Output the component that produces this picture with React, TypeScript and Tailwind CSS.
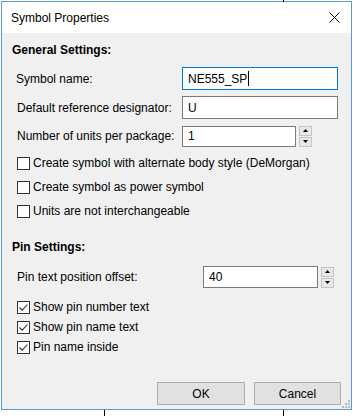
import React from 'react';

const font = { fontFamily: '"Liberation Sans", Arial, sans-serif' };

function CheckBox({ checked = false }: { checked?: boolean }) {
  return (
    <span className="flex h-[13px] w-[13px] shrink-0 items-center justify-center border border-[#333333] bg-white">
      {checked && (
        <svg width="11" height="11" viewBox="0 0 11 11" fill="none">
          <path d="M1.5 5.5 L4.2 8.2 L9.5 2.5" stroke="#333333" strokeWidth="1.1" />
        </svg>
      )}
    </span>
  );
}

function Spinner() {
  return (
    <div className="flex h-[21px] w-[13px] flex-col justify-between">
      <div className="flex h-[10px] items-center justify-center border border-[#c4c4c4] bg-[#e8e8e8]">
        <svg width="5" height="3" viewBox="0 0 5 3">
          <path d="M0 3 L2.5 0 L5 3 Z" fill="#000" />
        </svg>
      </div>
      <div className="flex h-[10px] items-center justify-center border border-[#c4c4c4] bg-[#e8e8e8]">
        <svg width="5" height="3" viewBox="0 0 5 3">
          <path d="M0 0 L2.5 3 L5 0 Z" fill="#000" />
        </svg>
      </div>
    </div>
  );
}

function TextBox({
  value,
  width,
  focused = false,
  height = 23,
}: {
  value: string;
  width: string;
  focused?: boolean;
  height?: number;
}) {
  return (
    <div
      className={`${width} flex items-center border bg-white pl-[5px] ${
        focused ? 'border-[#0078d7]' : 'border-[#7a7a7a]'
      }`}
      style={{ height }}
    >
      <span>{value}</span>
      {focused && <span className="ml-[1px] h-[15px] w-px bg-black" />}
    </div>
  );
}

function CheckRow({ label, checked, h }: { label: string; checked?: boolean; h: string }) {
  return (
    <div className={`flex ${h} items-center gap-[3px] pl-[15px]`}>
      <CheckBox checked={checked} />
      <span>{label}</span>
    </div>
  );
}

export default function App() {
  return (
    <div className="relative h-[416px] w-[353px] overflow-hidden bg-white text-[12px] text-black" style={font}>
      {/* background window lines */}
      <div className="absolute left-[283px] top-0 h-[2px] w-px bg-black" />
      <div className="absolute left-[104px] top-[410px] h-[6px] w-px bg-black" />
      <div className="absolute left-[283px] top-[410px] h-[6px] w-px bg-black" />

      <div className="ml-px mt-px flex h-[409px] w-[351px] flex-col border border-[#5b9bd5] bg-[#f0f0f0]">
        {/* title bar */}
        <div className="flex h-[31px] shrink-0 items-center justify-between bg-white pl-[9px] pr-[11px]">
          <span>Symbol Properties</span>
          <svg width="11" height="11" viewBox="0 0 11 11">
            <path d="M0.5 0.5 L10.5 10.5 M10.5 0.5 L0.5 10.5" stroke="#000" strokeWidth="1" />
          </svg>
        </div>

        <div className="mt-[9px] flex h-4 items-center pl-[10px] font-bold">General Settings:</div>

        <div className="mt-[9px] flex h-[23px] items-center pl-[14px]">
          <span className="w-[166px]">Symbol name:</span>
          <TextBox value="NE555_SP" width="w-[156px]" focused />
        </div>
        <div className="mt-[6px] flex h-[23px] items-center pl-[15px]">
          <span className="w-[165px]">Default reference designator:</span>
          <TextBox value="U" width="w-[156px]" />
        </div>
        <div className="mt-[6px] flex h-[22px] items-center pl-[15px]">
          <span className="w-[165px]">Number of units per package:</span>
          <TextBox value="1" width="w-[114px]" height={21} />
          <div className="ml-[3px]">
            <Spinner />
          </div>
        </div>

        <div className="mt-[4px]">
          <CheckRow h="h-[24px]" label="Create symbol with alternate body style (DeMorgan)" />
          <CheckRow h="h-[24px]" label="Create symbol as power symbol" />
          <CheckRow h="h-[24px]" label="Units are not interchangeable" />
        </div>

        <div className="mt-[16px] flex h-4 items-center pl-[10px] font-bold">Pin Settings:</div>

        <div className="mt-[11px] flex h-[22px] items-center pl-[15px]">
          <span className="w-[186px]">Pin text position offset:</span>
          <TextBox value="40" width="w-[115px]" height={22} />
          <div className="ml-[3px]">
            <Spinner />
          </div>
        </div>

        <div className="mt-[9px]">
          <CheckRow h="h-[20px]" label="Show pin number text" checked />
          <CheckRow h="h-[20px]" label="Show pin name text" checked />
          <CheckRow h="h-[20px]" label="Pin name inside" checked />
        </div>

        <div className="flex-1" />

        <div className="relative flex justify-end gap-[9px] pb-[4px] pr-[10px]">
          <button className="flex h-[23px] w-[88px] items-center justify-center border border-[#adadad] bg-[#e1e1e1]">
            OK
          </button>
          <button className="flex h-[23px] w-[87px] items-center justify-center border border-[#adadad] bg-[#e1e1e1]">
            Cancel
          </button>
          <svg className="absolute bottom-[1px] right-[1px]" width="9" height="9" viewBox="0 0 9 9">
            <g fill="#b8b8b8">
              <rect x="7" y="1" width="2" height="2" />
              <rect x="4" y="4" width="2" height="2" />
              <rect x="7" y="4" width="2" height="2" />
              <rect x="1" y="7" width="2" height="2" />
              <rect x="4" y="7" width="2" height="2" />
              <rect x="7" y="7" width="2" height="2" />
            </g>
          </svg>
        </div>
      </div>
    </div>
  );
}
